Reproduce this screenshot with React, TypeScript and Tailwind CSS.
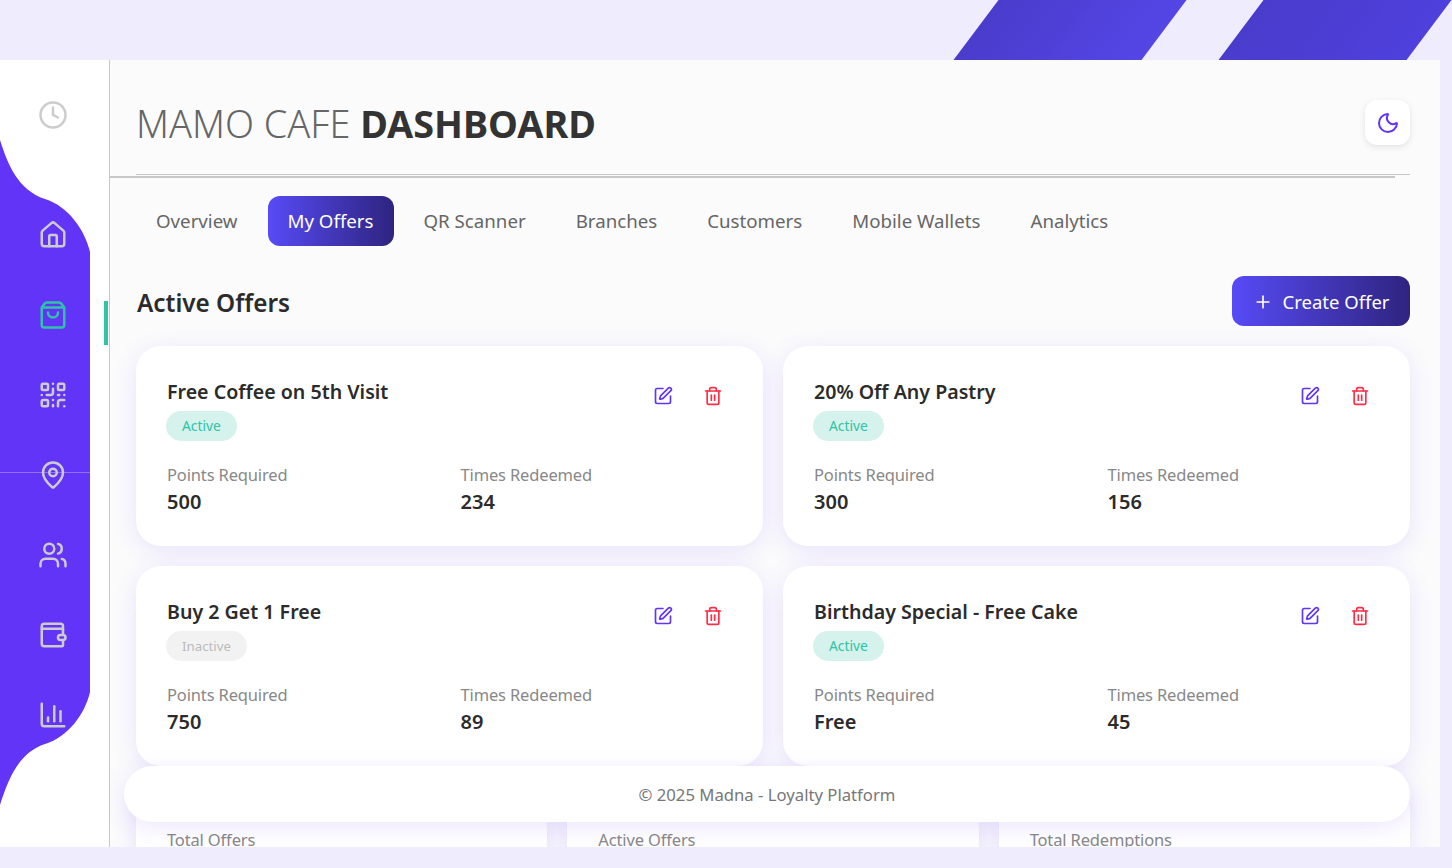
import { Clock, House, ShoppingBag, QrCode, MapPin, Users, ChartColumn, Moon, SquarePen, Trash2, Plus } from 'lucide-react';

const TABS = ['Overview', 'My Offers', 'QR Scanner', 'Branches', 'Customers', 'Mobile Wallets', 'Analytics'];

const OFFERS = [
  { id: 1, title: 'Free Coffee on 5th Visit', active: true, points: '500', redeemed: '234' },
  { id: 2, title: '20% Off Any Pastry', active: true, points: '300', redeemed: '156' },
  { id: 3, title: 'Buy 2 Get 1 Free', active: false, points: '750', redeemed: '89' },
  { id: 4, title: 'Birthday Special - Free Cake', active: true, points: 'Free', redeemed: '45' },
];

const STATS = ['Total Offers', 'Active Offers', 'Total Redemptions'];

function WalletIcon({ className }: { className?: string }) {
  return (
    <svg viewBox="0 0 24 24" fill="none" stroke="currentColor" strokeWidth="2" strokeLinecap="round" strokeLinejoin="round" className={className}>
      <path d="M20 11.5V5a2 2 0 0 0-2-2H5a2 2 0 0 0-2 2v14a2 2 0 0 0 2 2h14a1 1 0 0 0 1-1v-4" />
      <path d="M3 7h16a1 1 0 0 1 1 1" />
      <rect x="16" y="12" width="6" height="4" rx="2" />
    </svg>
  );
}

function Sidebar() {
  const icon = 'w-[30px] h-[30px] text-[#cccccc]';
  return (
    <aside className="relative w-[110px] shrink-0 bg-white border-r border-[#c8c8c8]">
      {/* purple wave behind the nav icons */}
      <svg className="absolute left-0 top-0 w-[90px] h-[787px]" viewBox="0 0 90 787" fill="#6234f8">
        <path d="M0 80C8 105 18 130 45 139C68 146 85 170 90 192V632C85 654 68 677 45 684C18 693 8 720 0 745Z" />
      </svg>
      <div className="absolute left-0 top-[412px] w-[90px] h-px bg-white/30" />
      <div className="absolute left-[104px] top-[241px] w-[4px] h-[44px] bg-[#2ec4a6]" />
      <nav className="relative flex flex-col items-center w-[106px] pt-[40px]">
        <Clock className={icon} />
        <div className="flex flex-col items-center gap-[50px] mt-[90px]">
          <House className={icon} />
          <ShoppingBag className="w-[30px] h-[30px] text-[#2ec4a6]" />
          <QrCode className={icon} />
          <MapPin className={icon} />
          <Users className={icon} />
          <WalletIcon className={icon} />
          <ChartColumn className={icon} />
        </div>
      </nav>
    </aside>
  );
}

function OfferCard({ offer }: { offer: (typeof OFFERS)[number] }) {
  const label = 'pl-px text-[16.5px] leading-[24px] tracking-[-0.15px] text-[#888888]';
  const value = 'pl-px text-[20px] leading-[27px] mt-px font-semibold text-[#2b2b2b]';
  return (
    <div className="bg-white rounded-[25px] p-[30px] pb-[31px] shadow-[0_5px_25px_rgba(98,52,248,0.12)]">
      <div className="flex justify-between">
        <div>
          <h3 className="text-[19.6px] leading-[27px] pt-[2px] pl-px font-semibold text-[#2b2b2b]">{offer.title}</h3>
          <span className={`inline-block mt-[6px] h-[30px] px-4 rounded-full leading-[30px] ${offer.active ? 'text-[13.8px] bg-[#d5f2ec] text-[#2ec4a6]' : 'text-[13.3px] bg-[#f2f2f2] text-[#bbbbbb]'}`}>
            {offer.active ? 'Active' : 'Inactive'}
          </span>
        </div>
        <div className="flex gap-[10px]">
          <button className="w-10 h-10 flex items-center justify-center text-[#6234f8]">
            <SquarePen className="w-5 h-5" />
          </button>
          <button className="w-10 h-10 flex items-center justify-center text-[#ff2d46]">
            <Trash2 className="w-5 h-5" />
          </button>
        </div>
      </div>
      <div className="grid grid-cols-2 gap-5 mt-[22px]">
        <div>
          <div className={label}>Points Required</div>
          <div className={value}>{offer.points}</div>
        </div>
        <div>
          <div className={label}>Times Redeemed</div>
          <div className={value}>{offer.redeemed}</div>
        </div>
      </div>
    </div>
  );
}

export default function App() {
  return (
    <div className="relative w-[1452px] h-[868px] overflow-hidden bg-[#eeecfd] pt-[60px] pb-[21px] pr-[12px] font-['Noto_Sans',sans-serif]">
      {/* top decoration stripes */}
      <div className="absolute top-0 left-[976px] w-[188px] h-[60px] -skew-x-[36.87deg] bg-gradient-to-r from-[#4a3ccb] to-[#5446e6]" />
      <div className="absolute top-0 left-[1241px] w-[188px] h-[60px] -skew-x-[36.87deg] bg-gradient-to-r from-[#4a3ccb] to-[#4e40dc]" />

      <div className="flex h-full">
        <Sidebar />
        <main className="relative flex-1 bg-[#fbfbfc] overflow-hidden">
          <header className="flex items-center justify-between h-[115px] pt-[15px] ml-[26px] mr-[30px] border-b border-[#c8c8c8]">
            <h1 className="text-[37.8px] font-light text-[#666666]">
              MAMO CAFE <span className="font-bold text-[#333333]">DASHBOARD</span>
            </h1>
            <button className="w-[45px] h-[45px] mb-[4px] rounded-xl bg-white flex items-center justify-center shadow-[0_2px_6px_rgba(0,0,0,0.1)] text-[#6234f8]">
              <Moon className="w-6 h-6" />
            </button>
          </header>
          <div className="h-[2px] mt-px bg-[#c8c8c8] w-[1285px]" />

          <div className="pl-[26px] pr-[30px] pt-[18px]">
            <nav className="flex gap-[10px]">
              {TABS.map((tab) => (
                <button
                  key={tab}
                  className={`h-[50px] px-5 pt-px rounded-xl text-[18.7px] ${tab === 'My Offers' ? 'text-white bg-gradient-to-r from-[#574bf7] to-[#2f2480]' : 'text-[#666666]'}`}
                >
                  {tab}
                </button>
              ))}
            </nav>

            <div className="flex items-center justify-between mt-[30px] h-[50px]">
              <h2 className="text-[24.3px] pt-[4px] pl-px font-semibold text-[#2b2b2b]">Active Offers</h2>
              <button className="flex items-center gap-[10px] h-[50px] w-[178px] pt-px justify-center rounded-xl text-white text-[18.5px] bg-gradient-to-r from-[#574bf7] to-[#2f2480]">
                <Plus className="w-5 h-5" />
                Create Offer
              </button>
            </div>

            <div className="grid grid-cols-2 gap-5 mt-5">
              {OFFERS.map((offer) => (
                <OfferCard key={offer.id} offer={offer} />
              ))}
            </div>

            <div className="grid grid-cols-3 gap-5 mt-5">
              {STATS.map((stat) => (
                <div key={stat} className="h-[200px] bg-white rounded-[25px] px-[30px] pt-[42px] shadow-[0_5px_25px_rgba(98,52,248,0.12)]">
                  <div className="pl-px text-[16.5px] leading-[24px] tracking-[-0.15px] text-[#888888]">{stat}</div>
                </div>
              ))}
            </div>
          </div>

          <footer className="absolute left-[14px] right-[30px] top-[706px] h-[56px] pt-px rounded-[28px] bg-white flex items-center justify-center text-[16.7px] text-[#777777] shadow-[0_5px_25px_rgba(98,52,248,0.12)]">
            © 2025 Madna - Loyalty Platform
          </footer>
        </main>
      </div>
    </div>
  );
}
